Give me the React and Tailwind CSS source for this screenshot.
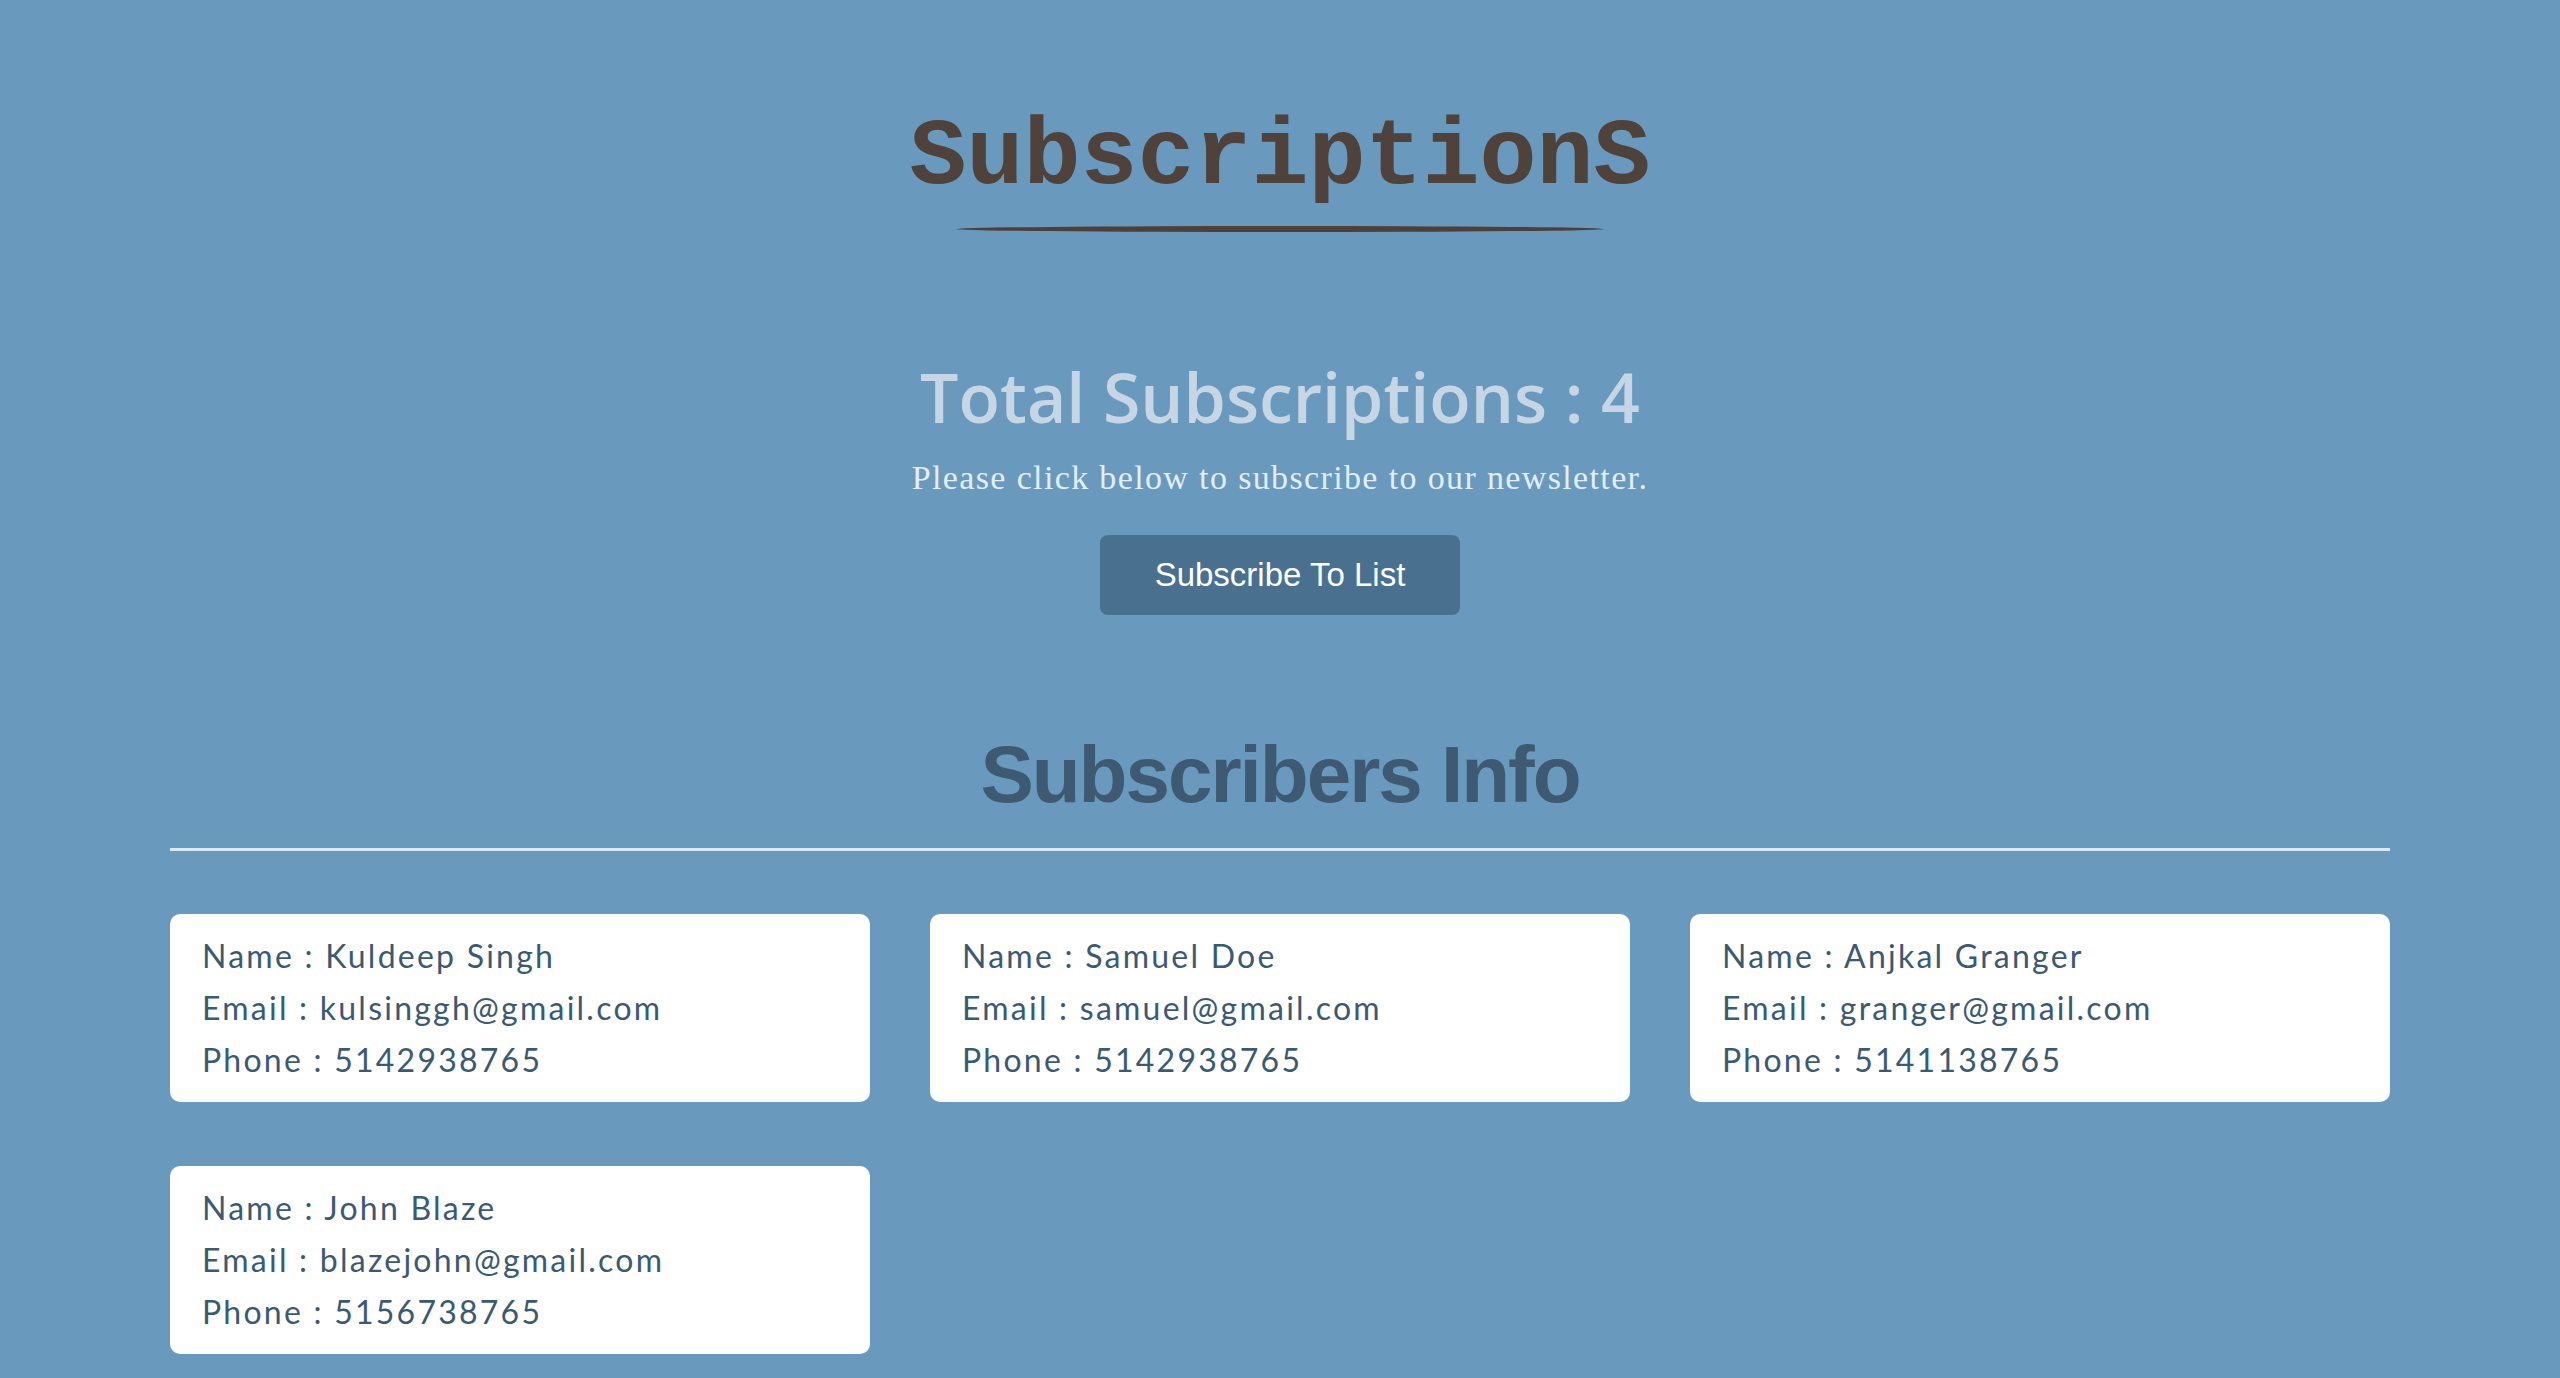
import React from "react";

const subs = [
  { name: "Kuldeep Singh", email: "kulsinggh@gmail.com", phone: "5142938765" },
  { name: "Samuel Doe", email: "samuel@gmail.com", phone: "5142938765" },
  { name: "Anjkal Granger", email: "granger@gmail.com", phone: "5141138765" },
  { name: "John Blaze", email: "blazejohn@gmail.com", phone: "5156738765" },
];

export default function App() {
  return (
    <div className="min-h-screen bg-[#6999bc] pt-[111px] pb-[30px]">
      <h1 className="text-center font-['Liberation_Mono',monospace] font-bold text-[95px] leading-none text-[#4e423a]">
        SubscriptionS
      </h1>
      <div className="mx-auto mt-[20px] h-[6px] w-[648px] rounded-[50%] bg-[#4d4039]" />
      <h2 className="mt-[131px] text-center font-['Open_Sans',sans-serif] font-semibold text-[68px] leading-none text-[#c6d6e4]">
        Total Subscriptions : 4
      </h2>
      <p className="mt-[30px] text-center font-['Liberation_Serif',serif] text-[34px] leading-none tracking-[0.04em] text-[#e3edf5]">
        Please click below to subscribe to our newsletter.
      </p>
      <div className="mt-[40px] flex justify-center">
        <button className="h-[80px] w-[360px] rounded-lg bg-[#49708f] font-['Liberation_Sans',sans-serif] text-[33px] text-white">
          Subscribe To List
        </button>
      </div>
      <h2 className="mt-[120px] text-center font-['Liberation_Sans',sans-serif] font-bold text-[80px] leading-none tracking-tight text-[#3d5a72]">
        Subscribers Info
      </h2>
      <div className="mx-[170px] mt-[33px] h-[3px] bg-[#dce8f2]" />
      <div className="mt-[63px] grid grid-cols-3 gap-x-[60px] gap-y-[64px] px-[170px]">
        {subs.map((s) => (
          <div
            key={s.name}
            className="rounded-[10px] bg-white px-[32px] py-[16px] font-['Lato',sans-serif] text-[32px] leading-[52px] tracking-[0.07em] text-[#3a5a74]"
          >
            <div>Name : {s.name}</div>
            <div>Email : {s.email}</div>
            <div>Phone : {s.phone}</div>
          </div>
        ))}
      </div>
    </div>
  );
}
